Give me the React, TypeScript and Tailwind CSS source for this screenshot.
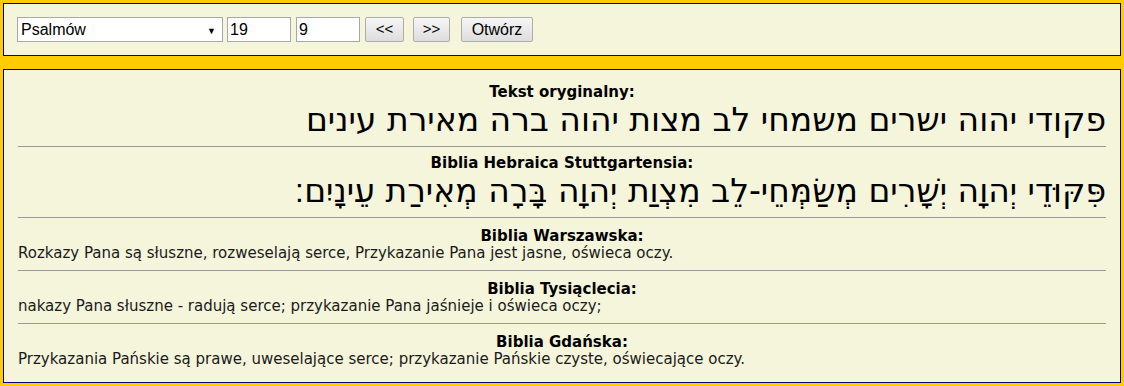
import React from "react";

const Title = ({ children }: { children: React.ReactNode }) => (
  <div className="font-bold text-[15px] leading-[17px] text-black text-center">{children}</div>
);

const Hebrew = ({ children }: { children: React.ReactNode }) => (
  <div dir="rtl" className="text-right text-[33px] leading-[38px] text-black" style={{ fontFamily: '"DejaVu Sans", sans-serif' }}>
    {children}
  </div>
);

const Plain = ({ children }: { children: React.ReactNode }) => (
  <div className="text-left text-[15px] leading-[17px] text-[#1a1a1a]">{children}</div>
);

export default function App() {
  return (
    <div className="w-[1124px] h-[386px] bg-[#FFCC00] p-[3px] flex flex-col gap-[13px]" style={{ fontFamily: '"DejaVu Sans", Verdana, sans-serif' }}>
      <div className="border border-[#000080] bg-[#F5F5DC] h-[53px] flex items-center px-[13px]" style={{ fontFamily: '"Liberation Sans", Arial, sans-serif' }}>
        <div className="relative w-[206px] h-[25px] bg-white border border-[#a9a9a9] flex items-center pl-[3px] text-[16px] text-black">
          Psalmów
          <span className="absolute right-[6px] top-[7px] text-[9px]">▼</span>
        </div>
        <div className="ml-[4px] w-[64px] h-[25px] bg-white border border-[#a9a9a9] flex items-center pl-[2px] text-[16px]">19</div>
        <div className="ml-[5px] w-[64px] h-[25px] bg-white border border-[#a9a9a9] flex items-center pl-[2px] text-[16px]">9</div>
        <div className="ml-[5px] w-[39px] h-[25px] rounded-[2px] border border-[#adadad] bg-gradient-to-b from-[#f6f6f6] to-[#dddddd] flex items-center justify-center text-[15px]">&lt;&lt;</div>
        <div className="ml-[9px] w-[37px] h-[25px] rounded-[2px] border border-[#adadad] bg-gradient-to-b from-[#f6f6f6] to-[#dddddd] flex items-center justify-center text-[15px]">&gt;&gt;</div>
        <div className="ml-[11px] w-[72px] h-[25px] rounded-[2px] border border-[#adadad] bg-gradient-to-b from-[#f6f6f6] to-[#dddddd] flex items-center justify-center text-[16px]">Otwórz</div>
      </div>
      <div className="border border-[#000080] bg-[#F5F5DC] flex-1 px-[14px] pt-[14px]">
        <Title>Tekst oryginalny:</Title>
        <Hebrew>פקודי יהוה ישרים משמחי לב מצות יהוה ברה מאירת עינים</Hebrew>
        <div className="h-px bg-[#999] mt-[7px] mb-[8px]" />
        <Title>Biblia Hebraica Stuttgartensia:</Title>
        <Hebrew>פִּקּוּדֵי יְהוָה יְשָׁרִים מְשַׂמְּחֵי-לֵב מִצְוַת יְהוָה בָּרָה מְאִירַת עֵינָיִם׃</Hebrew>
        <div className="h-px bg-[#999] mt-[7px] mb-[10px]" />
        <Title>Biblia Warszawska:</Title>
        <Plain>Rozkazy Pana są słuszne, rozweselają serce, Przykazanie Pana jest jasne, oświeca oczy.</Plain>
        <div className="h-px bg-[#999] mt-[8px] mb-[10px]" />
        <Title>Biblia Tysiąclecia:</Title>
        <Plain>nakazy Pana słuszne - radują serce; przykazanie Pana jaśnieje i oświeca oczy;</Plain>
        <div className="h-px bg-[#999] mt-[8px] mb-[10px]" />
        <Title>Biblia Gdańska:</Title>
        <Plain>Przykazania Pańskie są prawe, uweselające serce; przykazanie Pańskie czyste, oświecające oczy.</Plain>
      </div>
    </div>
  );
}
